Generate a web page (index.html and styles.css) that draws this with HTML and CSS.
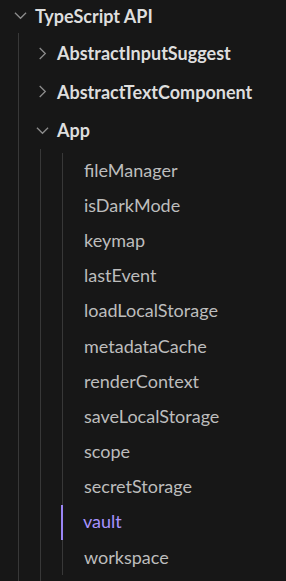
FILE: index.html
```html
<!DOCTYPE html>
<html>
<head>
<meta charset="utf-8">
<link rel="stylesheet" href="styles.css">
</head>
<body>
<div class="tree">
  <div class="row root-row">
    <svg class="chev" viewBox="0 0 14 8"><path d="M1 1 L7 7 L13 1"/></svg>
    <span class="label bold">TypeScript API</span>
  </div>
  <div class="children level1">
    <div class="row folder-row">
      <svg class="chev right" viewBox="0 0 8 14"><path d="M1 1 L7 7 L1 13"/></svg>
      <span class="label bold">AbstractInputSuggest</span>
    </div>
    <div class="row folder-row">
      <svg class="chev right" viewBox="0 0 8 14"><path d="M1 1 L7 7 L1 13"/></svg>
      <span class="label bold">AbstractTextComponent</span>
    </div>
    <div class="row folder-row">
      <svg class="chev" viewBox="0 0 14 8"><path d="M1 1 L7 7 L13 1"/></svg>
      <span class="label bold">App</span>
    </div>
    <div class="children level2">
      <div class="leaf">fileManager</div>
      <div class="leaf">isDarkMode</div>
      <div class="leaf">keymap</div>
      <div class="leaf">lastEvent</div>
      <div class="leaf">loadLocalStorage</div>
      <div class="leaf">metadataCache</div>
      <div class="leaf">renderContext</div>
      <div class="leaf">saveLocalStorage</div>
      <div class="leaf">scope</div>
      <div class="leaf">secretStorage</div>
      <div class="leaf active">vault</div>
      <div class="leaf">workspace</div>
    </div>
  </div>
</div>
</body>
</html>
```
FILE: styles.css
```css
html, body {
  margin: 0;
  padding: 0;
  background: #171717;
  height: 100%;
  overflow: hidden;
}
body {
  font-family: "Lato", "Open Sans", sans-serif;
  color: #dadada;
}
.row {
  display: flex;
  align-items: center;
}
.root-row {
  height: 33px;
  padding-left: 14px;
  box-sizing: border-box;
  padding-bottom: 2px;
}
.folder-row {
  height: 38.5px;
  padding-left: 17px;
  box-sizing: border-box;
  padding-top: 2px;
}
.chev {
  width: 13px;
  height: 13px;
  fill: none;
  stroke: #8c8c8c;
  stroke-width: 1.4;
  flex: none;
  margin-right: 8px;
}
.label {
  font-size: 18px;
}
.bold {
  font-weight: 700;
  color: #dedede;
}
.children {
  border-left: 1px solid #383838;
}
.level1 {
  margin-left: 18px;
}
.level2 {
  margin-left: 21px;
  padding-top: 4.5px;
  height: 440px;
}
.leaf {
  margin-left: 21px;
  border-left: 1px solid #383838;
  padding-left: 21px;
  padding-bottom: 2px;
  box-sizing: border-box;
  height: 35.2px;
  display: flex;
  align-items: center;
  font-size: 18px;
  color: #bdbdbd;
}
.leaf.active {
  border-left: 2px solid #9a85f5;
  padding-left: 20px;
  margin-left: 20px;
  color: #a793ff;
}
```
